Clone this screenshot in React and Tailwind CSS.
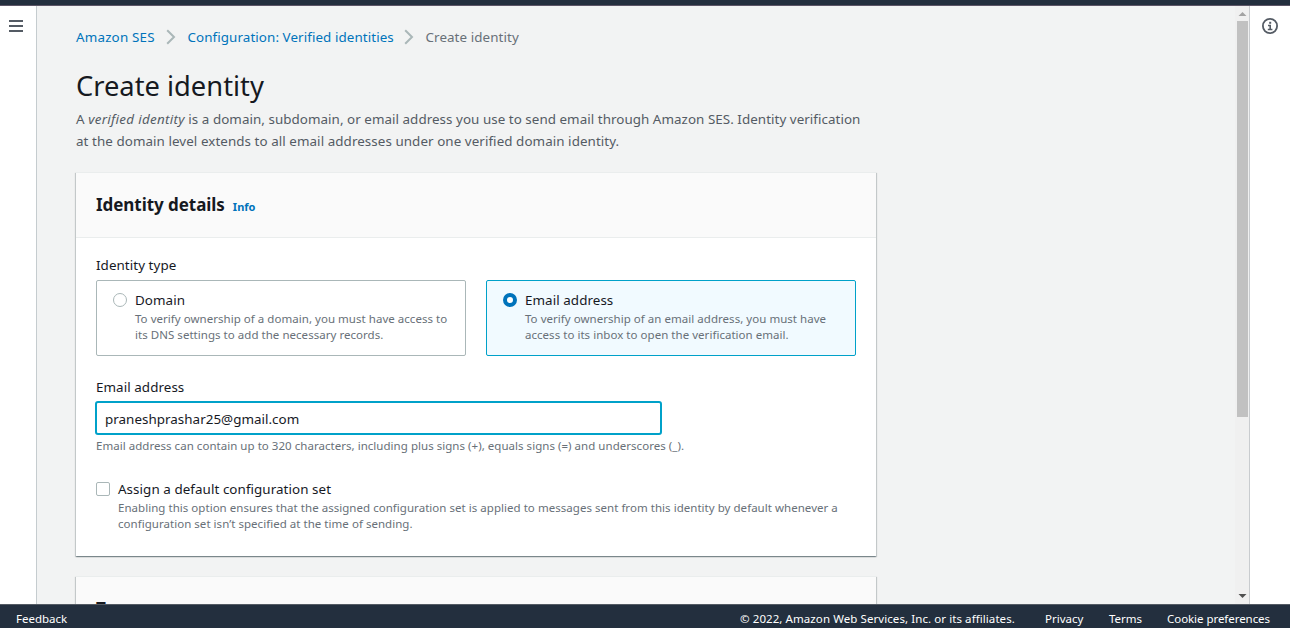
import React from "react";

const cardShadow =
  "shadow-[0_1px_1px_0_rgba(0,28,36,0.3),1px_1px_1px_0_rgba(0,28,36,0.15),-1px_1px_1px_0_rgba(0,28,36,0.15)]";

const body = "text-[13.4px] tracking-[0.065px] ";
const hint = "text-[11.5px] leading-4 tracking-[0.035px] text-[#687078]";

function Line({ className = "", children }) {
  return (
    <div className="flex">
      <span className={"whitespace-nowrap " + className}>{children}</span>
    </div>
  );
}

function Chevron({ className = "" }) {
  return (
    <svg className={"h-4 w-2.5 shrink-0 " + className} viewBox="0 0 10 16" fill="none" stroke="#aab7b8" strokeWidth="2">
      <path d="M1.2 1.2L8 8L1.2 14.8" />
    </svg>
  );
}

function Tile({ selected, title, lines }) {
  return (
    <label
      className={
        "flex h-[76px] w-[370px] gap-2 rounded-[2px] border pl-4 pt-[9px] " +
        (selected ? "border-[#00a1c9] bg-[#f1faff]" : "border-[#aab7b8] bg-white")
      }
    >
      <span
        className={
          "mt-[3px] size-3.5 shrink-0 rounded-full " +
          (selected ? "border-4 border-[#0073bb] bg-white" : "border border-[#aab7b8] bg-white")
        }
      />
      <span className="block">
        <Line className={body + "leading-[21px] text-[#16191f]"}>{title}</Line>
        <Line className={hint}>{lines[0]}</Line>
        <Line className={hint}>{lines[1]}</Line>
      </span>
    </label>
  );
}

export default function App() {
  return (
    <div className="flex h-[628px] w-[1290px] flex-col overflow-hidden bg-[#f2f3f3] font-['Noto_Sans',sans-serif]">
      <header className="h-1.5 shrink-0 border-b border-[#5c5566] bg-[#232f3e]" />
      <div className="flex min-h-0 flex-1">
        <aside className="w-[37px] shrink-0 border-r border-[#c5cccf] bg-white pl-[9px] pt-3.5">
          <svg className="h-3 w-3.5" viewBox="0 0 14 12" fill="#545b64">
            <path d="M0 0h14v2H0zM0 5h14v2H0zM0 10h14v2H0z" />
          </svg>
        </aside>
        <main className="min-w-0 flex-1 overflow-hidden pl-[39px]">
          <nav className="flex h-[62px] items-center text-[13.4px] tracking-[0.08px] text-[#0073bb]">
            <span className="w-[90px] whitespace-nowrap tracking-[0.18px]">Amazon SES</span>
            <Chevron className="mr-[11.500px]" />
            <span className="w-[216.500px] whitespace-nowrap">Configuration: Verified identities</span>
            <Chevron className="mr-[11.500px]" />
            <span className="whitespace-nowrap text-[#687078]">Create identity</span>
          </nav>
          <h1 className="pt-px text-[27.3px] leading-[34px] text-[#16191f]">
            <Line>Create identity</Line>
          </h1>
          <div className={body + "pt-[5px] leading-[22px] text-[#545b64]"}>
            <Line className="tracking-[0.045px]">
              A <em className="tracking-[0.3px]">verified identity</em> is a domain, subdomain, or email address you use to send email through Amazon SES. Identity verification
            </Line>
            <Line>at the domain level extends to all email addresses under one verified domain identity.</Line>
          </div>
          <section className={"mt-5 h-[384px] w-[800px] border-t border-[#eaeded] bg-white " + cardShadow}>
            <div className="flex h-[65px] items-baseline gap-2 border-b border-[#eaeded] bg-[#fafafa] pl-5 pt-[18px]">
              <h2 className="whitespace-nowrap text-[17px] font-bold leading-[27px] tracking-[-0.05px] text-[#16191f]">Identity details</h2>
              <a className="text-[11px] font-bold text-[#0073bb]">Info</a>
            </div>
            <div className="pl-5 pt-4 text-[#16191f]">
              <Line className={body + "leading-[22px]"}>Identity type</Line>
              <div className="mt-1 flex gap-5">
                <Tile
                  title="Domain"
                  lines={["To verify ownership of a domain, you must have access to", "its DNS settings to add the necessary records."]}
                />
                <Tile
                  selected
                  title="Email address"
                  lines={["To verify ownership of an email address, you must have", "access to its inbox to open the verification email."]}
                />
              </div>
              <div className="mt-5">
                <Line className={body + "leading-[22px]"}>Email address</Line>
              </div>
              <div className="-ml-px mt-[3px] flex h-[34px] w-[567px] items-center rounded-[3px] border-2 border-[#00a1c9] bg-white pl-2 pt-0.5">
                <Line className="text-[13.4px] leading-5 tracking-[0.03px]">praneshprashar25@gmail.com</Line>
              </div>
              <div className="mt-[3px]">
                <Line className={hint}>
                  Email address can contain up to 320 characters, including plus signs (+), equals signs (=) and underscores (_).
                </Line>
              </div>
              <div className="mt-6 flex gap-2">
                <span className="mt-1 size-3.5 shrink-0 rounded-[2px] border border-[#aab7b8] bg-white" />
                <div>
                  <Line className={body + "leading-[22px]"}>Assign a default configuration set</Line>
                  <Line className={hint}>
                    Enabling this option ensures that the assigned configuration set is applied to messages sent from this identity by default whenever a
                  </Line>
                  <Line className={hint}>
                    configuration set isn’t specified at the time of sending.
                  </Line>
                </div>
              </div>
            </div>
          </section>
          <section className={"mt-5 h-[200px] w-[800px] border-t border-[#eaeded] bg-[#fafafa] pl-5 pt-[18px] " + cardShadow}>
            <h2 className="text-[17px] font-bold leading-[27px] text-[#16191f]">Tags</h2>
          </section>
        </main>
        <div className="flex w-[14px] shrink-0 flex-col items-center bg-[#f0f0f0]">
          <svg className="h-[15px] w-[14px] shrink-0" viewBox="0 0 14 15" fill="#a3a3a3">
            <path d="M3.5 10h8L7.500 6z" />
          </svg>
          <div className="ml-px h-[396px] w-[11px] shrink-0 bg-[#c1c1c1]" />
          <div className="flex-1" />
          <svg className="h-[15px] w-[14px] shrink-0" viewBox="0 0 14 15" fill="#505050">
            <path d="M3.500 5h8L7.500 9z" />
          </svg>
        </div>
        <aside className="w-[41px] shrink-0 border-l border-[#c9cccf] bg-white pl-3 pt-3">
          <svg className="size-4" viewBox="0 0 16 16" fill="none" stroke="#545b64">
            <circle cx="8" cy="8" r="7.1" strokeWidth="1.800" />
            <path d="M6 7.500h3M8.200 7v5M5.800 11.500h4.600" strokeWidth="1.600" />
            <path d="M7.200 4.800h2" strokeWidth="2" />
          </svg>
        </aside>
      </div>
      <footer className="flex h-6 shrink-0 items-center border-t border-[#545b64] bg-[#232f3e] pl-4 pr-5 pt-1 text-[11.5px] text-white">
        <span className="flex-1">Feedback</span>
        <div className="flex whitespace-nowrap">
          <span className="w-[305px] tracking-[0.08px]">© 2022, Amazon Web Services, Inc. or its affiliates.</span>
          <span className="w-16">Privacy</span>
          <span className="w-[58px]">Terms</span>
          <span className="w-[103px] tracking-[-0.05px]">Cookie preferences</span>
        </div>
      </footer>
    </div>
  );
}
